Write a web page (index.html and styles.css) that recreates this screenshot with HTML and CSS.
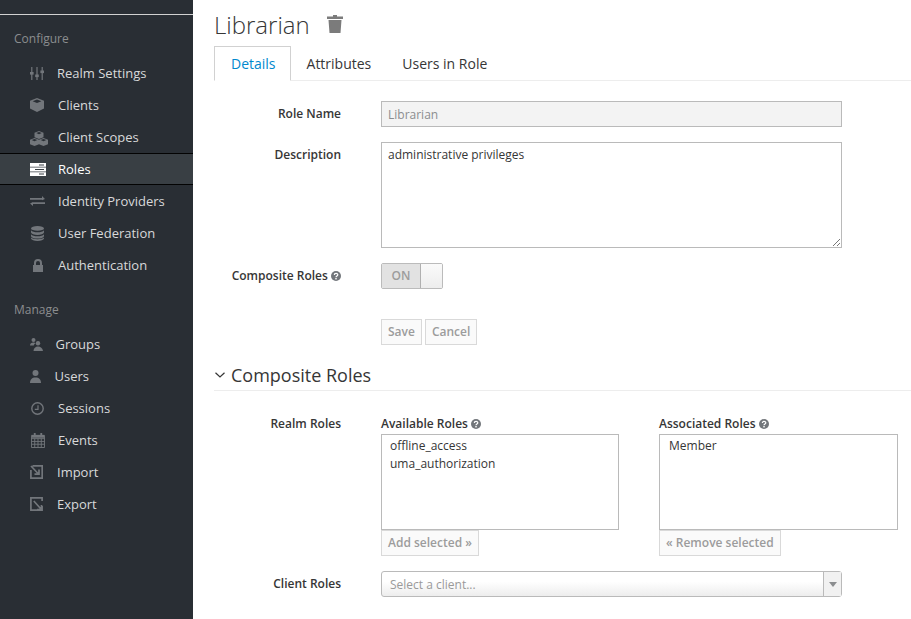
FILE: index.html
```html
<!DOCTYPE html>
<html lang="en">
<head>
<meta charset="utf-8">
<title>Librarian</title>
<link rel="stylesheet" href="styles.css">
</head>
<body>
<div class="page">
<aside class="sidebar">
  <div class="topline"></div>
  <h2 class="side-head first">Configure</h2>
  <ul class="menu">
    <li><svg class="ic i-slide" viewBox="0 0 14 13"><g fill="#72767b"><rect x="1.200" y="0" width="1.200" height="13"/><rect x="0" y="5" width="3.600" height="2.600"/><rect x="6.400" y="0" width="1.200" height="13"/><rect x="5.200" y="7.500" width="3.600" height="2.600"/><rect x="11.600" y="0" width="1.200" height="13"/><rect x="10.400" y="3.500" width="3.600" height="2.600"/></g></svg><span class="t t1">Realm Settings</span></li>
    <li><svg class="ic i-cube" viewBox="0 0 14 14"><path fill="#72767b" d="M7 0l7 2.800v7.700L7 14l-7-3.500V2.800z"/><path fill="#292e34" d="M7 1.600l4.400 1.700L7 5 2.600 3.300z"/></svg><span class="t">Clients</span></li>
    <li><svg class="ic i-scope" viewBox="0 0 18 15"><path fill="#72767b" d="M9 0l4.500 1.700v4.500L9 8 4.500 6.200V1.700zM4.500 7L9 8.700v4.600L4.500 15 0 13.300V8.700zM13.500 7L18 8.700v4.600L13.500 15 9 13.300V8.700z"/><path fill="#292e34" d="M9 1l2.800 1.100L9 3.200 6.200 2.100zM4.500 8l2.800 1.100-2.800 1.100-2.800-1.100zM13.500 8l2.800 1.100-2.800 1.100-2.800-1.100z"/></svg><span class="t tw">Client Scopes</span></li>
    <li class="active"><svg class="ic i-roles" viewBox="0 0 16 13"><path fill="#fff" d="M0 0h16v3.800H0zM0 4.600h16v3.800H0zM0 9.200h16V13H0z"/><path fill="#393f44" d="M9 1.500h5v1H9zM5 6h9v1H5zM9 10.600h5v1H9z"/></svg><span class="t">Roles</span></li>
    <li><svg class="ic i-idp" viewBox="0 0 15 10"><path fill="#72767b" d="M0 2h12V0l3 3-3 1.200V3.800H0zM15 6.200v1.800H3v2L0 7.500 3 6v.2z"/></svg><span class="t">Identity Providers</span></li>
    <li><svg class="ic i-db" viewBox="0 0 13 15"><g fill="#72767b"><ellipse cx="6.500" cy="2.400" rx="6.500" ry="2.400"/><path d="M0 4.300c1 1.400 3.500 2 6.500 2s5.500-.6 6.500-2v2.300C12.500 8 10 8.900 6.500 8.900S.5 8 0 6.600zM0 8.300c1 1.400 3.500 2 6.500 2s5.500-.6 6.500-2v1.900c-.5 1.400-3 2.300-6.500 2.300S.5 11.600 0 10.200z"/><path d="M0 11.600c1 1.300 3.500 1.700 6.500 1.700s5.500-.4 6.500-1.700v1c-.5 1.500-3 2.400-6.500 2.400S.5 14.100 0 12.600z"/></g></svg><span class="t">User Federation</span></li>
    <li><svg class="ic i-lock" viewBox="0 0 10 13"><path fill="#72767b" fill-rule="evenodd" d="M0 6h1V4a4 4 0 0 1 8 0v2h1v7H0zM3 6h4V4a2 2 0 0 0-4 0z"/></svg><span class="t">Authentication</span></li>
  </ul>
  <h2 class="side-head">Manage</h2>
  <ul class="menu">
    <li><svg class="ic i-grp" viewBox="0 0 13 13"><g fill="#72767b"><circle cx="3.500" cy="2" r="2"/><path d="M0 7.500c0-2 1.300-3 3.500-3 1 0 1.500.2 2 .6-1 .7-1.500 1.500-1.800 2.400z"/><circle cx="8" cy="5.300" r="2.200"/><path d="M3.500 13c.2-3 2-4.500 4.500-4.500s4.500 1.500 5 4.500z"/></g></svg><span class="t t2">Groups</span></li>
    <li><svg class="ic i-user" viewBox="0 0 11 13"><g fill="#72767b"><circle cx="5.500" cy="3" r="3"/><path d="M0 13c0-3.500 2-5.500 5.500-5.500S11 9.500 11 13z"/></g></svg><span class="t t3">Users</span></li>
    <li><svg class="ic i-clock" viewBox="0 0 13 13"><circle cx="6.500" cy="6.500" r="5.700" fill="none" stroke="#72767b" stroke-width="1.400"/><path d="M7 3.200V7.300H3.800" fill="none" stroke="#72767b" stroke-width="1.200"/></svg><span class="t">Sessions</span></li>
    <li><svg class="ic i-cal" viewBox="0 0 15 16"><path fill="none" stroke="#72767b" d="M.5 2.500h14v13H.5zM.5 6h14M.5 9h14M.5 12h14M4 6v9M7.500 6v9M11 6v9"/><path fill="#72767b" d="M3 0h2v4H3zM10 0h2v4h-2zM1 2h13v3H1z"/></svg><span class="t">Events</span></li>
    <li><svg class="ic i-io" viewBox="0 0 13 14"><path fill="none" stroke="#72767b" stroke-width="1.700" d="M2.500.9h9.700v12.200H.9V5M1 1l7.500 8M4.500 9.200h4.500V4.600"/></svg><span class="t t1">Import</span></li>
    <li><svg class="ic i-io" viewBox="0 0 13 14"><path fill="none" stroke="#72767b" stroke-width="1.700" d="M12.100 9v4.100H.9V.9h11.200V4M3.800 4l7.400 8.300M7 12.500h4.500V8"/></svg><span class="t t1">Export</span></li>
  </ul>
</aside>
<main class="main">
  <h1 class="title">Librarian <svg class="trash" viewBox="0 0 16 18"><path fill="#7b7b7b" d="M6 0h4v1.500h6V4H0V1.500h6zM1.500 5h13L13.500 18h-11z"/></svg></h1>
  <ul class="tabs">
    <li class="tab on">Details</li>
    <li class="tab">Attributes</li>
    <li class="tab">Users in Role</li>
  </ul>
  <form class="form">
    <div class="row r-name">
      <label class="lbl">Role Name</label>
      <div class="input disabled">Librarian</div>
    </div>
    <div class="row r-desc">
      <label class="lbl">Description</label>
      <div class="textarea">administrative privileges
        <svg class="grip" viewBox="0 0 10 10"><path d="M9 2L2 9M9 6L6 9" stroke="#777" fill="none"/></svg>
      </div>
    </div>
    <div class="row r-comp">
      <label class="lbl">Composite Roles <svg class="help" viewBox="0 0 10 10"><circle cx="5" cy="5" r="5" fill="#72767b"/><path d="M3.300 4c0-2.200 3.500-2.200 3.500-.3C6.800 5 5 4.800 5 6.200" fill="none" stroke="#fff" stroke-width="1.200"/><rect x="4.300" y="7" width="1.400" height="1.400" fill="#fff"/></svg></label>
      <div class="switch"><span class="on-part">ON</span><span class="knob"></span></div>
    </div>
    <div class="row r-btns">
      <span class="lbl"></span>
      <button type="button" class="btn">Save</button>
      <button type="button" class="btn">Cancel</button>
    </div>
  </form>
  <h2 class="section"><svg class="chev" viewBox="0 0 10 6"><path d="M.5.700L5 5 9.500.700" fill="none" stroke="#363636" stroke-width="1.200"/></svg>Composite Roles</h2>
  <div class="row r-realm">
    <label class="lbl">Realm Roles</label>
    <div class="pick p1">
      <div class="pick-head">Available Roles <svg class="help" viewBox="0 0 10 10"><circle cx="5" cy="5" r="5" fill="#72767b"/><path d="M3.300 4c0-2.200 3.500-2.200 3.500-.3C6.800 5 5 4.800 5 6.200" fill="none" stroke="#fff" stroke-width="1.200"/><rect x="4.300" y="7" width="1.400" height="1.400" fill="#fff"/></svg></div>
      <div class="list"><div>offline_access</div><div>uma_authorization</div></div>
      <button type="button" class="btn mini">Add selected »</button>
    </div>
    <div class="pick p2">
      <div class="pick-head">Associated Roles <svg class="help" viewBox="0 0 10 10"><circle cx="5" cy="5" r="5" fill="#72767b"/><path d="M3.300 4c0-2.200 3.500-2.200 3.500-.3C6.800 5 5 4.800 5 6.200" fill="none" stroke="#fff" stroke-width="1.200"/><rect x="4.300" y="7" width="1.400" height="1.400" fill="#fff"/></svg></div>
      <div class="list member"><div>Member</div></div>
      <button type="button" class="btn mini">« Remove selected</button>
    </div>
  </div>
  <div class="row r-client">
    <label class="lbl">Client Roles</label>
    <div class="select"><span class="ph">Select a client...</span><span class="arrow"></span></div>
  </div>
</main>
</div>
</body>
</html>
```
FILE: styles.css
```css
* { box-sizing: border-box; }
html, body { margin: 0; height: 100%; overflow: hidden; }
body { font-family: "Open Sans", sans-serif; font-size: 12px; color: #363636; background: #fff; }
.page { display: flex; height: 619px; width: 911px; }
.sidebar { width: 193px; flex: none; background: #292e34; color: #d1d1d1; }
.topline { height: 1px; margin-top: 14px; background: #d1d1d1; }
.side-head { margin: 0; font-size: 12px; font-weight: 400; line-height: 16px; color: #8b8d8f; padding-left: 14px; }
.side-head.first { padding-top: 16px; }
.menu { list-style: none; margin: 0 0 6px; padding: 10px 0 0; }
.menu + .side-head { padding-top: 15px; }
.menu li { display: flex; align-items: center; height: 32px; padding-left: 30px; font-size: 13px; color: #d8d9da; }
.menu li.active { background: #393f44; color: #fff; border-top: 1px solid #030303; border-bottom: 1px solid #030303; }
.ic { flex: none; }
.i-slide { width: 14px; height: 13px; margin-right: 2px; }
.i-cube { width: 14px; height: 14px; margin-right: 2px; }
.i-scope { width: 18px; height: 15px; margin-bottom: -3px; }
.i-roles { width: 16px; height: 13px; }
.i-idp { width: 15px; height: 10px; margin-right: 1px; }
.i-db { width: 13px; height: 15px; margin: 0 2px 0 1px; }
.i-lock { width: 10px; height: 13px; margin: 0 3px; }
.i-grp { width: 13px; height: 13px; margin-right: 3px; }
.i-user { width: 11px; height: 13px; margin-right: 5px; }
.i-clock { width: 13px; height: 13px; margin: 0 2px 0 1px; }
.i-cal { width: 14px; height: 15px; margin: 0 1px; }
.i-io { width: 13px; height: 14px; margin-right: 3px; }
.t { margin-left: 12px; }
.tw { margin-left: 10px; }
.t1 { margin-left: 11px; }
.t2 { margin-left: 9.5px; }
.t3 { margin-left: 8.5px; }
.main { flex: 1; min-width: 0; padding: 0 0 0 21px; }
.title { margin: 0; height: 46px; padding-top: 3px; font-size: 24px; font-weight: 300; line-height: 30px; color: #363636; display: flex; align-items: center; }
.trash { width: 16px; height: 18px; margin-left: 17px; margin-top: -1px; }
.tabs { list-style: none; margin: 0; padding: 0; display: flex; height: 35px; border-bottom: 1px solid #ededed; }
.tab { padding: 8px 15px 8px 16px; font-size: 14px; line-height: 19px; height: 35px; }
.tab.on { color: #0088ce; border: 1px solid #d1d1d1; border-bottom: 1px solid #fff; padding: 7px 14px 7px 16px; }
.form { padding-top: 20px; }
.row { display: flex; align-items: flex-start; }
.lbl { width: 127px; flex: none; text-align: right; font-weight: 600; font-size: 12px; line-height: 16px; color: #363636; margin-right: 40px; }
.r-name { height: 41px; }
.r-name .lbl { padding-top: 5px; }
.input { width: 461px; height: 26px; border: 1px solid #bababa; padding: 1px 6px 0; line-height: 24px; font-size: 12px; }
.input.disabled { background: #f3f3f3; color: #8b8d8f; }
.r-desc { height: 121px; }
.r-desc .lbl { padding-top: 5px; }
.textarea { position: relative; width: 461px; height: 106px; border: 1px solid #bababa; padding: 3px 6px; line-height: 17px; font-size: 12px; color: #363636; }
.grip { position: absolute; right: 0; bottom: 0; width: 10px; height: 10px; }
.r-comp { height: 56px; }
.r-comp .lbl { padding-top: 5px; }
.help { width: 10px; height: 10px; vertical-align: -1px; }
.switch { display: flex; width: 62px; height: 26px; border: 1px solid #bbb; border-radius: 2px; overflow: hidden; }
.on-part { width: 39px; background: #e2e2e2; color: #9c9c9c; font-weight: 600; font-size: 12px; text-align: center; line-height: 24px; border-right: 1px solid #b0b0b0; }
.knob { flex: 1; background: linear-gradient(#fafafa, #ededed); }
.r-btns { height: 41px; }
.btn { height: 26px; padding: 0 6px; margin: 0 3px 0 0; border: 1px solid #d9d9d9; background: #fafafa; color: #9c9c9c; font: 600 12px/24px "Open Sans", sans-serif; }
.section { margin: 0; height: 31px; border-bottom: 1px solid #ededed; font-size: 18px; font-weight: 400; line-height: 28px; color: #363636; display: flex; align-items: center; gap: 6px; padding-bottom: 1px; }
.chev { width: 10px; height: 6px; margin-left: 1px; }
.r-realm { padding-top: 25px; height: 180px; }
.pick-head { font-weight: 600; font-size: 12px; line-height: 16px; height: 18px; }
.pick.p1 { width: 238px; margin-right: 40px; }
.pick.p2 { width: 239px; }
.list { height: 96px; border: 1px solid #bababa; padding: 2px 8px; font-size: 12px; line-height: 18px; }
.member div { padding-left: 1px; }
.btn.mini { display: block; margin: 0; height: 26px; padding: 0 6px; }
.r-client .lbl { padding-top: 5px; }
.select { position: relative; width: 461px; height: 26px; border: 1px solid #bababa; border-radius: 3px; background: linear-gradient(#fff 40%, #ededed); padding: 1px 8px 0; line-height: 24px; color: #9a9a9a; font-size: 12px; }
.arrow { position: absolute; right: 0; top: 0; width: 18px; height: 24px; border-left: 1px solid #bababa; background: #f1f1f1; }
.arrow::after { content: ""; position: absolute; left: 5px; top: 10px; border: 4px solid transparent; border-top: 5px solid #8b8d8f; border-bottom: 0; }
```
